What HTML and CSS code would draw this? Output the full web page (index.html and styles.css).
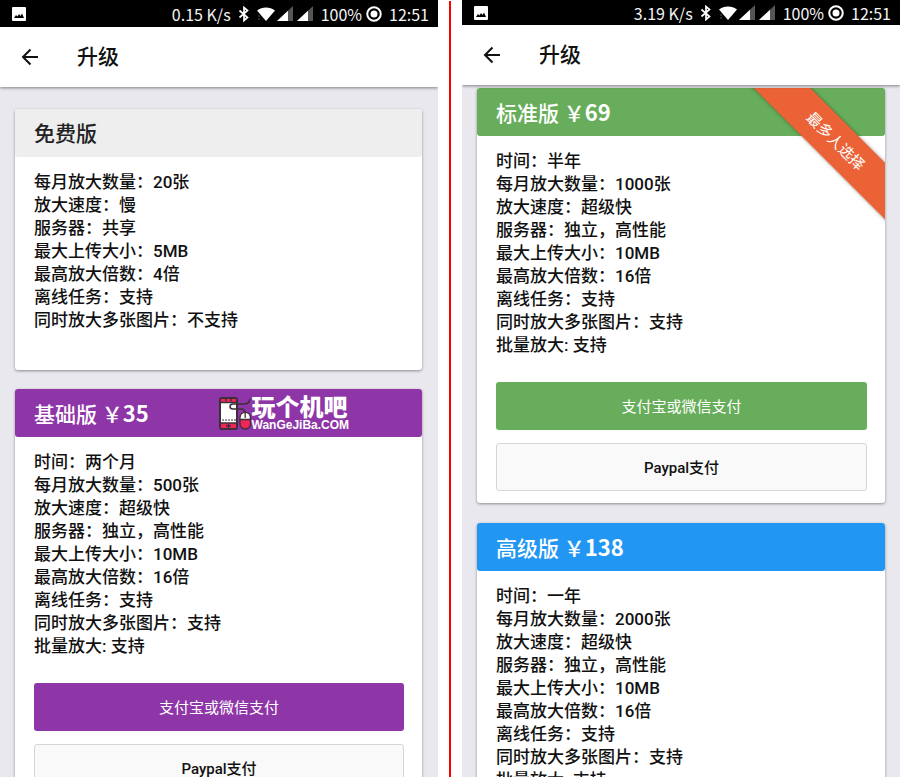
FILE: index.html
```html
<!DOCTYPE html>
<html lang="zh-CN">
<head>
    <meta charset="UTF-8">
    <meta name="viewport" content="width=device-width, initial-scale=1.0">
    <title>升级</title>
    <link rel="stylesheet" href="styles.css">
</head>
<body>

    <!-- Shared icons -->
    <svg class="sprite" aria-hidden="true">
        <symbol id="picture" viewBox="0 0 14 14">
            <rect width="14" height="14" rx="1" fill="#fff"/>
            <path d="M2 11l2-3 1.500 1.500L7 7l1.500 2L10 6.500 12 11z" fill="#000"/>
        </symbol>
        <symbol id="bluetooth" viewBox="0 0 12 16">
            <path d="M1.500 4.500l8 7L6 14.500v-13l3.500 3-8 7" fill="none" stroke="#fff" stroke-width="1.700"/>
        </symbol>
        <symbol id="wifi" viewBox="0 0 18 16">
            <path d="M0 4.500C5 0.500 13 0.500 18 4.500L9 15z" fill="#fff"/>
            <path d="M1 10h2M1 13h2" stroke="#555" stroke-width="1"/>
        </symbol>
        <symbol id="signal" viewBox="0 0 16 16">
            <path d="M0 15L16 0v15z" fill="#555"/>
            <path d="M0 15L11 4.700V15z" fill="#fff"/>
        </symbol>
        <symbol id="battery" viewBox="0 0 16 16">
            <circle cx="8" cy="8" r="6.750" fill="none" stroke="#fff" stroke-width="2"/>
            <circle cx="8" cy="8" r="3.500" fill="#fff"/>
        </symbol>
        <symbol id="back" viewBox="0 0 20 20">
            <path d="M18 10H3M10.500 2.500L3 10l7.500 7.500" fill="none" stroke="#111" stroke-width="2"/>
        </symbol>
    </svg>

    <div class="compare">
        <section class="phone">
            <div class="status-bar">
                <svg class="icon-picture"><use href="#picture"/></svg>
                <span class="speed">0.15 K/s</span>
                <svg class="icon-bluetooth"><use href="#bluetooth"/></svg>
                <svg class="icon-wifi"><use href="#wifi"/></svg>
                <svg class="icon-signal"><use href="#signal"/></svg>
                <svg class="icon-signal"><use href="#signal"/></svg>
                <span class="percent">100%</span>
                <svg class="icon-battery"><use href="#battery"/></svg>
                <span class="clock">12:51</span>
            </div>
            <header class="app-bar">
                <button type="button" class="back" aria-label="返回"><svg><use href="#back"/></svg></button>
                <h1>升级</h1>
            </header>
            <main class="plans">
                <article class="card free">
                    <h2>免费版</h2>
                    <ul>
                        <li>每月放大数量：20张</li>
                        <li>放大速度：慢</li>
                        <li>服务器：共享</li>
                        <li>最大上传大小：5MB</li>
                        <li>最高放大倍数：4倍</li>
                        <li>离线任务：支持</li>
                        <li>同时放大多张图片：不支持</li>
                    </ul>
                </article>
                <article class="card basic">
                    <h2>基础版 ￥<span class="price">35</span></h2>
                    <div class="site-logo">
                        <svg viewBox="0 0 32 33">
                            <rect x="1" y="1" width="17" height="31" rx="2" fill="#fff" stroke="#3b3038" stroke-width="2"/>
                            <path d="M2 2h15v3H2zM2 26h15v5H2z" fill="#f0265a"/>
                            <path d="M1 5.500h17M1 26h17M7 2v2M12 2v2M7 29h5M9.500 27v4" fill="none" stroke="#3b3038" stroke-width="1.500"/>
                            <path d="M4 24v-2M7 24v-2M10 24v-2M13 24v-2M16 24v-2" stroke="#3b3038" stroke-width="1"/>
                            <path d="M31 2q-1 5-5 5H14q-3 0-3 2.500t3 2.500h8q4 0 4 4" fill="none" stroke="#3b3038" stroke-width="1.500"/>
                            <rect x="21" y="15.500" width="10.500" height="16.500" rx="5" fill="#f0265a" stroke="#3b3038" stroke-width="1.300"/>
                            <path d="M21.700 22v-1.500a4.500 4.500 0 0 1 9 0V22z" fill="#fff"/>
                            <path d="M26.200 16v5M21 22.500h10.500" stroke="#3b3038" stroke-width="1.300"/>
                        </svg>
                        <div class="site-name">
                            <strong>玩个机吧</strong>
                            <small>WanGeJiBa.COM</small>
                        </div>
                    </div>
                    <ul>
                        <li>时间：两个月</li>
                        <li>每月放大数量：500张</li>
                        <li>放大速度：超级快</li>
                        <li>服务器：独立，高性能</li>
                        <li>最大上传大小：10MB</li>
                        <li>最高放大倍数：16倍</li>
                        <li>离线任务：支持</li>
                        <li>同时放大多张图片：支持</li>
                        <li>批量放大: 支持</li>
                    </ul>
                    <div class="actions">
                        <button type="button" class="pay">支付宝或微信支付</button>
                        <button type="button" class="paypal">Paypal支付</button>
                    </div>
                </article>
            </main>
        </section>

        <div class="divider"></div>

        <section class="phone scrolled">
            <div class="status-bar">
                <svg class="icon-picture"><use href="#picture"/></svg>
                <span class="speed">3.19 K/s</span>
                <svg class="icon-bluetooth"><use href="#bluetooth"/></svg>
                <svg class="icon-wifi"><use href="#wifi"/></svg>
                <svg class="icon-signal"><use href="#signal"/></svg>
                <svg class="icon-signal"><use href="#signal"/></svg>
                <span class="percent">100%</span>
                <svg class="icon-battery"><use href="#battery"/></svg>
                <span class="clock">12:51</span>
            </div>
            <header class="app-bar">
                <button type="button" class="back" aria-label="返回"><svg><use href="#back"/></svg></button>
                <h1>升级</h1>
            </header>
            <main class="plans">
                <article class="card standard">
                    <h2>标准版 ￥<span class="price">69</span></h2>
                    <div class="ribbon-clip"><div class="ribbon">最多人选择</div></div>
                    <ul>
                        <li>时间：半年</li>
                        <li>每月放大数量：1000张</li>
                        <li>放大速度：超级快</li>
                        <li>服务器：独立，高性能</li>
                        <li>最大上传大小：10MB</li>
                        <li>最高放大倍数：16倍</li>
                        <li>离线任务：支持</li>
                        <li>同时放大多张图片：支持</li>
                        <li>批量放大: 支持</li>
                    </ul>
                    <div class="actions">
                        <button type="button" class="pay">支付宝或微信支付</button>
                        <button type="button" class="paypal">Paypal支付</button>
                    </div>
                </article>
                <article class="card premium">
                    <h2>高级版 ￥<span class="price">138</span></h2>
                    <ul>
                        <li>时间：一年</li>
                        <li>每月放大数量：2000张</li>
                        <li>放大速度：超级快</li>
                        <li>服务器：独立，高性能</li>
                        <li>最大上传大小：10MB</li>
                        <li>最高放大倍数：16倍</li>
                        <li>离线任务：支持</li>
                        <li>同时放大多张图片：支持</li>
                        <li>批量放大: 支持</li>
                    </ul>
                </article>
            </main>
        </section>
    </div>

</body>
</html>
```
FILE: styles.css
```css
* {
    box-sizing: border-box;
}
body {
    margin: 0;
    height: 100vh;
    overflow: hidden;
    background: #fff;
    color: #111;
    font-family: Roboto, "Noto Sans CJK SC", sans-serif;
}
.sprite {
    display: none;
}
.compare {
    display: grid;
    grid-template-columns: 1fr 24px 1fr;
    height: 100%;
}
.divider {
    width: 2px;
    margin: 1px auto 0;
    background: #f00;
}
.phone {
    display: flex;
    flex-direction: column;
    min-width: 0;
    overflow: hidden;
    background: #e9e8ee;
}

/* Status bar */
.status-bar {
    display: flex;
    flex: none;
    align-items: center;
    height: 27px;
    padding: 0 9px 0 12px;
    background: #000;
    color: #f4f4f4;
    font-family: "Noto Sans CJK SC", sans-serif;
    font-size: 16px;
    line-height: 24px;
}
.icon-picture {
    width: 14px;
    height: 14px;
    margin-right: auto;
}
.icon-bluetooth {
    width: 12px;
    height: 16px;
    margin-left: 7px;
}
.icon-wifi {
    width: 18px;
    height: 16px;
    margin-left: 7px;
}
.icon-signal {
    width: 16px;
    height: 16px;
    margin-left: 2px;
}
.icon-signal + .icon-signal {
    margin-left: 4px;
}
.percent {
    margin-left: 8px;
}
.icon-battery {
    width: 16px;
    height: 16px;
    margin: 0 7px 0 4px;
}

/* Title bar */
.app-bar {
    display: flex;
    flex: none;
    align-items: center;
    position: relative;
    z-index: 1;
    height: 60px;
    padding-left: 20px;
    background: #fff;
    box-shadow: 0 1px 3px rgba(0, 0, 0, 0.45);
}
.back {
    width: 20px;
    height: 20px;
    padding: 0;
    border: none;
    background: none;
}
.back svg {
    display: block;
    width: 20px;
    height: 20px;
}
.app-bar h1 {
    margin: 0 0 0 37px;
    font-size: 21px;
    line-height: 30px;
    font-weight: 500;
}

/* Plan cards */
.plans {
    padding: 22px 16px 20px 15px;
}
.scrolled .status-bar {
    height: 25px;
}
.scrolled .plans {
    padding: 3px 15px 20px;
}
.card {
    position: relative;
    margin-bottom: 20px;
    border-radius: 3px;
    background: #fff;
    box-shadow: 0 1px 3px rgba(0, 0, 0, 0.4);
}
.card h2 {
    height: 48px;
    margin: 0;
    padding: 0 19px;
    border-radius: 3px;
    color: #fff;
    font-family: "Noto Sans CJK SC", sans-serif;
    font-size: 21px;
    line-height: 46px;
    font-weight: 500;
}
.price {
    font-size: 22px;
    font-weight: 700;
}
.card ul {
    margin: 0;
    padding: 14px 19px 0;
    list-style: none;
    font-size: 17px;
    line-height: 23px;
    font-weight: 500;
}
.free ul {
    padding-bottom: 38px;
}
.free h2 {
    background: #eee;
    color: #222;
}
.basic h2,
.basic .pay {
    background: #8e35a8;
}
.standard h2,
.standard .pay {
    background: #67ad5b;
}
.premium h2 {
    background: #2296f3;
}
.free {
    margin-bottom: 19px;
}
.actions {
    display: grid;
    gap: 13px;
    padding: 25px 18px 12px 19px;
}
.actions button {
    height: 48px;
    padding: 0 0 2px;
    border: none;
    border-radius: 3px;
    font-family: inherit;
    font-size: 15px;
    font-weight: 500;
}
.actions .pay {
    color: #fff;
    font-weight: 400;
}
.actions .paypal {
    border: 1px solid #d6d6d6;
    background: #f9f9f9;
    color: #111;
}

/* Corner ribbon */
.ribbon-clip {
    position: absolute;
    inset: 0;
    overflow: hidden;
    pointer-events: none;
}
.ribbon {
    position: absolute;
    top: 32px;
    right: -49px;
    width: 200px;
    padding-left: 4px;
    background: #ea6236;
    box-shadow: 0 0 4px rgba(0, 0, 0, 0.4);
    color: #fff;
    font-size: 15px;
    line-height: 40px;
    text-align: center;
    transform: rotate(45deg);
}

/* Site logo over the card heading */
.site-logo {
    display: flex;
    align-items: center;
    position: absolute;
    top: 5px;
    left: 50%;
    color: #fff;
}
.site-logo svg {
    width: 32px;
    height: 33px;
}
.site-name {
    display: grid;
    margin-left: 1px;
}
.site-name strong {
    font-family: "Noto Sans CJK SC", sans-serif;
    font-size: 24px;
    line-height: 24px;
    font-weight: 900;
}
.site-name small {
    font-family: "Liberation Sans", sans-serif;
    font-size: 12px;
    line-height: 14px;
    font-weight: 700;
}
```
